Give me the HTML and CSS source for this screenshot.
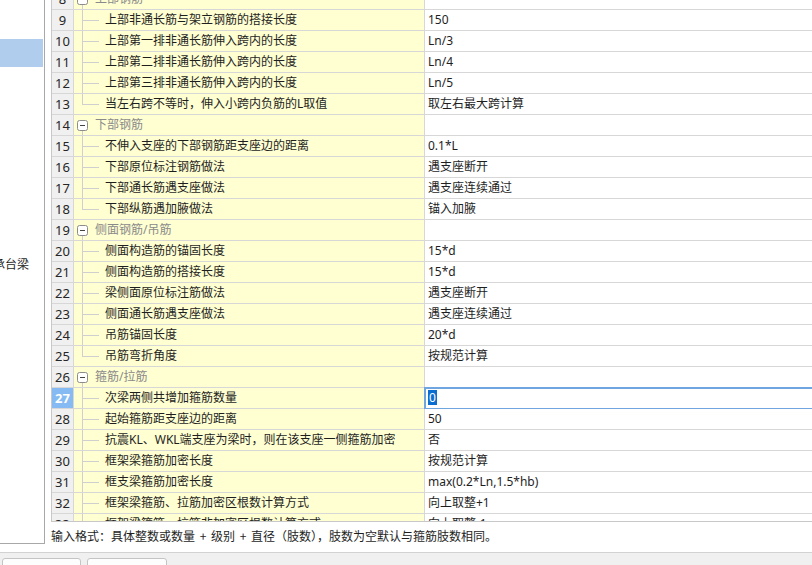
FILE: index.html
```html
<!DOCTYPE html>
<html>
<head>
<meta charset="utf-8">
<link rel="stylesheet" href="styles.css">
</head>
<body>
<div class="app">
  <div class="main">
    <aside class="side">
      <div class="side-sel"></div>
      <div class="side-item"><span class="side-txt">承台梁</span></div>
    </aside>
    <section class="content">
      <div class="grid">
        <div class="rows">
          <div class="row group"><div class="num">8</div><div class="name"><svg class="tog" width="11" height="11" viewBox="0 0 11 11"><rect x="0.5" y="0.5" width="10" height="10" rx="2" fill="#fff" stroke="#8c8c8c"/><line x1="3" y1="5.5" x2="8" y2="5.5" stroke="#444"/></svg><span class="gtxt">上部钢筋</span></div><div class="val"></div></div>
          <div class="row"><div class="num">9</div><div class="name"><span class="branch"></span><span class="txt">上部非通长筋与架立钢筋的搭接长度</span></div><div class="val">150</div></div>
          <div class="row"><div class="num">10</div><div class="name"><span class="branch"></span><span class="txt">上部第一排非通长筋伸入跨内的长度</span></div><div class="val">Ln/3</div></div>
          <div class="row"><div class="num">11</div><div class="name"><span class="branch"></span><span class="txt">上部第二排非通长筋伸入跨内的长度</span></div><div class="val">Ln/4</div></div>
          <div class="row"><div class="num">12</div><div class="name"><span class="branch"></span><span class="txt">上部第三排非通长筋伸入跨内的长度</span></div><div class="val">Ln/5</div></div>
          <div class="row"><div class="num">13</div><div class="name"><span class="branch last"></span><span class="txt">当左右跨不等时，伸入小跨内负筋的L取值</span></div><div class="val">取左右最大跨计算</div></div>
          <div class="row group"><div class="num">14</div><div class="name"><svg class="tog" width="11" height="11" viewBox="0 0 11 11"><rect x="0.5" y="0.5" width="10" height="10" rx="2" fill="#fff" stroke="#8c8c8c"/><line x1="3" y1="5.5" x2="8" y2="5.5" stroke="#444"/></svg><span class="gtxt">下部钢筋</span></div><div class="val"></div></div>
          <div class="row"><div class="num">15</div><div class="name"><span class="branch"></span><span class="txt">不伸入支座的下部钢筋距支座边的距离</span></div><div class="val">0.1*L</div></div>
          <div class="row"><div class="num">16</div><div class="name"><span class="branch"></span><span class="txt">下部原位标注钢筋做法</span></div><div class="val">遇支座断开</div></div>
          <div class="row"><div class="num">17</div><div class="name"><span class="branch"></span><span class="txt">下部通长筋遇支座做法</span></div><div class="val">遇支座连续通过</div></div>
          <div class="row"><div class="num">18</div><div class="name"><span class="branch last"></span><span class="txt">下部纵筋遇加腋做法</span></div><div class="val">锚入加腋</div></div>
          <div class="row group"><div class="num">19</div><div class="name"><svg class="tog" width="11" height="11" viewBox="0 0 11 11"><rect x="0.5" y="0.5" width="10" height="10" rx="2" fill="#fff" stroke="#8c8c8c"/><line x1="3" y1="5.5" x2="8" y2="5.5" stroke="#444"/></svg><span class="gtxt">侧面钢筋/吊筋</span></div><div class="val"></div></div>
          <div class="row"><div class="num">20</div><div class="name"><span class="branch"></span><span class="txt">侧面构造筋的锚固长度</span></div><div class="val">15*d</div></div>
          <div class="row"><div class="num">21</div><div class="name"><span class="branch"></span><span class="txt">侧面构造筋的搭接长度</span></div><div class="val">15*d</div></div>
          <div class="row"><div class="num">22</div><div class="name"><span class="branch"></span><span class="txt">梁侧面原位标注筋做法</span></div><div class="val">遇支座断开</div></div>
          <div class="row"><div class="num">23</div><div class="name"><span class="branch"></span><span class="txt">侧面通长筋遇支座做法</span></div><div class="val">遇支座连续通过</div></div>
          <div class="row"><div class="num">24</div><div class="name"><span class="branch"></span><span class="txt">吊筋锚固长度</span></div><div class="val">20*d</div></div>
          <div class="row"><div class="num">25</div><div class="name"><span class="branch last"></span><span class="txt">吊筋弯折角度</span></div><div class="val">按规范计算</div></div>
          <div class="row group"><div class="num">26</div><div class="name"><svg class="tog" width="11" height="11" viewBox="0 0 11 11"><rect x="0.5" y="0.5" width="10" height="10" rx="2" fill="#fff" stroke="#8c8c8c"/><line x1="3" y1="5.5" x2="8" y2="5.5" stroke="#444"/></svg><span class="gtxt">箍筋/拉筋</span></div><div class="val"></div></div>
          <div class="row selected"><div class="num">27</div><div class="name"><span class="branch"></span><span class="txt">次梁两侧共增加箍筋数量</span></div><div class="val"><span class="hl">0</span></div></div>
          <div class="row"><div class="num">28</div><div class="name"><span class="branch"></span><span class="txt">起始箍筋距支座边的距离</span></div><div class="val">50</div></div>
          <div class="row"><div class="num">29</div><div class="name"><span class="branch"></span><span class="txt">抗震KL、WKL端支座为梁时，则在该支座一侧箍筋加密</span></div><div class="val">否</div></div>
          <div class="row"><div class="num">30</div><div class="name"><span class="branch"></span><span class="txt">框架梁箍筋加密长度</span></div><div class="val">按规范计算</div></div>
          <div class="row"><div class="num">31</div><div class="name"><span class="branch"></span><span class="txt">框支梁箍筋加密长度</span></div><div class="val">max(0.2*Ln,1.5*hb)</div></div>
          <div class="row"><div class="num">32</div><div class="name"><span class="branch"></span><span class="txt">框架梁箍筋、拉筋加密区根数计算方式</span></div><div class="val">向上取整+1</div></div>
          <div class="row"><div class="num">33</div><div class="name"><span class="branch"></span><span class="txt">框架梁箍筋、拉筋非加密区根数计算方式</span></div><div class="val">向上取整-1</div></div>
        </div>
      </div>
      <div class="hint">输入格式：具体整数或数量 + 级别 + 直径（肢数），肢数为空默认与箍筋肢数相同。</div>
    </section>
  </div>
  <div class="bottombar">
    <div class="btn"></div>
    <div class="btn wide"></div>
  </div>
</div>
</body>
</html>
```

FILE: styles.css
```css
* { box-sizing: border-box; }
html, body { margin: 0; padding: 0; }
body {
  width: 812px;
  height: 565px;
  overflow: hidden;
  background: #fff;
  font-family: "Noto Sans", "Noto Sans CJK SC", sans-serif;
  font-size: 12px;
  color: #1e1e1e;
}
.app { display: flex; flex-direction: column; height: 565px; }
.main { display: flex; height: 552px; }
.side {
  width: 45px;
  height: 544px;
  flex: none;
  border-right: 1px solid #a8a8a8;
  border-bottom: 1px solid #a8a8a8;
  display: flex;
  flex-direction: column;
  overflow: hidden;
}
.side-sel {
  margin-top: 39px;
  width: 43px;
  height: 28px;
  background: #b1cdee;
}
.side-item {
  margin-top: 188px;
  height: 18px;
  line-height: 18px;
  white-space: nowrap;
  overflow: hidden;
  font-family: "Noto Sans CJK SC", sans-serif;
}
.side-txt { display: inline-block; margin-left: -7px; }
.content {
  flex: 1;
  margin-left: 6px;
  display: flex;
  flex-direction: column;
  min-width: 0;
  overflow: hidden;
}
.grid {
  height: 522px;
  overflow: hidden;
  border-left: 1px solid #c8c8c8;
  border-bottom: 1px solid #c8c8c8;
}
.rows { margin-top: -11px; width: 820px; }
.row {
  display: grid;
  grid-template-columns: 22px 351px 1fr;
  height: 21px;
}
.row > div {
  border-bottom: 1px solid #d7d7d7;
  border-right: 1px solid #d7d7d7;
  height: 21px;
}
.num {
  background: #f0f0f0;
  text-align: center;
  font-family: "Noto Sans", sans-serif;
  font-size: 13px;
  line-height: 20px;
  color: #262626;
}
.name {
  background: #ffffd2;
  display: flex;
  align-items: center;
  white-space: nowrap;
  overflow: hidden;
}
.val {
  background: #fff;
  line-height: 20px;
  padding-left: 3px;
  white-space: nowrap;
}
.branch {
  align-self: stretch;
  width: 17px;
  margin-left: 8px;
  margin-right: 6px;
  flex: none;
  background:
    linear-gradient(#cfcfcf, #cfcfcf) no-repeat 0 0 / 1px 100%,
    linear-gradient(#cfcfcf, #cfcfcf) no-repeat 0 10px / 100% 1px;
}
.branch.last {
  background:
    linear-gradient(#cfcfcf, #cfcfcf) no-repeat 0 0 / 1px 11px,
    linear-gradient(#cfcfcf, #cfcfcf) no-repeat 0 10px / 100% 1px;
}
.txt { line-height: 20px; }
.group .name {
  background:
    linear-gradient(#cfcfcf, #cfcfcf) no-repeat 8px 15px / 1px 6px,
    #ffffd2;
}
.tog { margin-left: 3px; flex: none; display: block; }
.gtxt { margin-left: 7px; color: #8a8a8a; line-height: 20px; }
.selected .num {
  background: #85bbf2;
  color: #fff;
  font-weight: bold;
}
.selected .val {
  outline: 2px solid #6fa6e0;
  outline-offset: -1px;
}
.hl {
  display: inline-block;
  background: #0a6ed1;
  color: #fff;
  line-height: 15px;
  padding: 0 1px;
}
.hint {
  height: 30px;
  line-height: 28px;
  white-space: nowrap;
  word-spacing: 2px;
  font-family: "Noto Sans CJK SC", sans-serif;
  color: #1e1e1e;
}
.bottombar {
  flex: none;
  height: 13px;
  background: #f0f0f0;
  border-top: 1px solid #d2d2d2;
  display: flex;
  gap: 6px;
  padding: 5px 0 0 2px;
  overflow: hidden;
}
.btn {
  width: 79px;
  height: 20px;
  background: #fdfdfd;
  border: 1px solid #c4c4c4;
  border-radius: 3px;
}
.btn.wide { width: 80px; }
```
